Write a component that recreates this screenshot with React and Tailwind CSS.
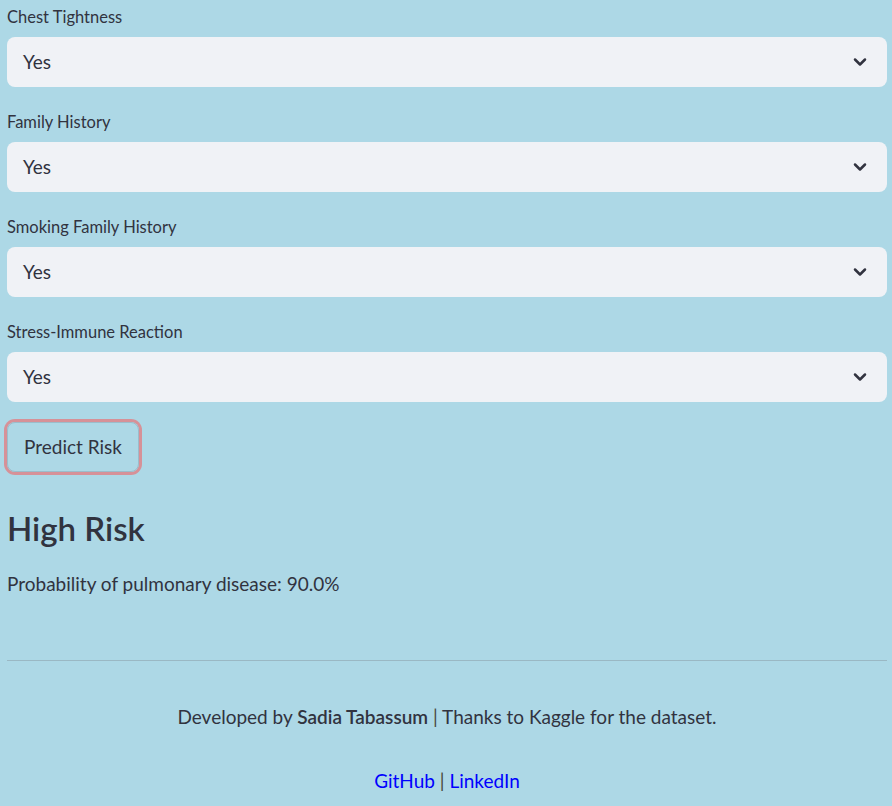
import { ChevronDown } from "lucide-react";

const fields = [
  "Chest Tightness",
  "Family History",
  "Smoking Family History",
  "Stress-Immune Reaction",
];

function SelectBox({ label }) {
  return (
    <div className="mb-[23px]">
      <div className="text-[16.5px] leading-[24px] mb-[8px]">{label}</div>
      <div className="h-[50px] rounded-[8px] bg-[#f0f2f6] flex items-center justify-between pl-4 pr-[17px]">
        <span className="text-[19px]">Yes</span>
        <ChevronDown size={20} strokeWidth={3} className="text-[#31333f]" />
      </div>
    </div>
  );
}

export default function App() {
  return (
    <div
      className="min-h-[806px] bg-[#add8e6] text-[#31333f] pl-[7px] pr-[5px] pt-[5px]"
      style={{ fontFamily: "Lato, 'Open Sans', sans-serif" }}
    >
      {fields.map((f) => (
        <SelectBox key={f} label={f} />
      ))}

      <button className="-mt-[3px] h-[50px] px-4 rounded-[8px] border border-[#9bbccb] text-[19px] ring-[3px] ring-[#d69198]">
        Predict Risk
      </button>

      <h2 className="mt-[34px] text-[33px] leading-[44px] font-semibold">High Risk</h2>
      <p className="mt-[22px] text-[19px] leading-[24px]">
        Probability of pulmonary disease: 90.0%
      </p>

      <hr className="mt-[64px] border-t border-[#9ab8c4]" />

      <div className="mt-[44px] text-center text-[19px] leading-[24px]">
        Developed by <b className="font-semibold">Sadia Tabassum</b>{" "}
        <span className="text-[#4a4a40]">|</span> Thanks to Kaggle for the dataset.
      </div>
      <div className="mt-[40px] text-center text-[19px] leading-[24px]">
        <a href="#" className="text-[#0000ff]">GitHub</a>{" "}
        <span className="text-[#4a4a40]">|</span>{" "}
        <a href="#" className="text-[#0000ff]">LinkedIn</a>
      </div>
    </div>
  );
}
